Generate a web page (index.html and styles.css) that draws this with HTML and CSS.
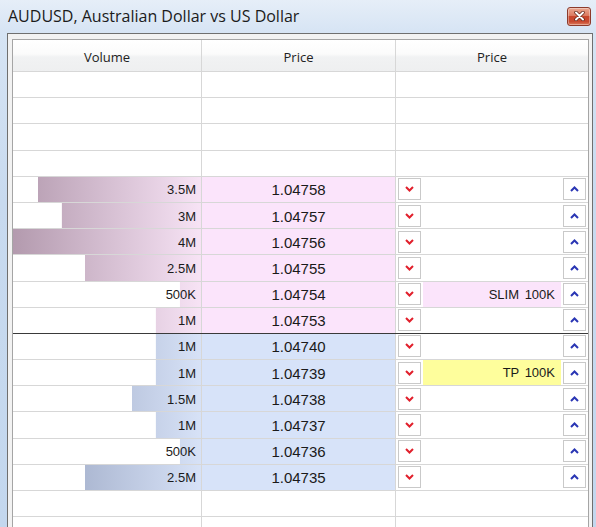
FILE: index.html
```html
<!DOCTYPE html>
<html>
<head>
<meta charset="utf-8">
<link rel="stylesheet" href="styles.css">
</head>
<body>
<div class="window">
  <div class="titlebar">
    <span class="title">AUDUSD, Australian Dollar vs US Dollar</span>
    <div class="close">
      <svg width="11" height="10" viewBox="0 0 11 10"><path d="M2 1.5 L9 8.5 M9 1.5 L2 8.5" stroke="#5a2216" stroke-width="3.4" stroke-linecap="round"/><path d="M2 1.5 L9 8.5 M9 1.5 L2 8.5" stroke="#ffffff" stroke-width="2" stroke-linecap="round"/></svg>
    </div>
  </div>
  <div class="frame">
    <div class="grid">
      <div class="row head"><div class="cell">Volume</div><div class="cell">Price</div><div class="cell">Price</div></div>

      <div class="row"><div class="cell"></div><div class="cell"></div><div class="cell"></div></div>
      <div class="row"><div class="cell"></div><div class="cell"></div><div class="cell"></div></div>
      <div class="row"><div class="cell"></div><div class="cell"></div><div class="cell"></div></div>
      <div class="row"><div class="cell"></div><div class="cell"></div><div class="cell"></div></div>

      <div class="row"><div class="cell vol ask" style="--w:86.7%">3.5M</div><div class="cell price ask">1.04758</div><div class="cell act"><span class="btn dn"><svg width="9" height="6" viewBox="0 0 9 6"><polyline points="1,1 4.5,4.5 8,1" fill="none" stroke="#e1202c" stroke-width="2"/></svg></span><span class="lbl"></span><span class="btn up"><svg width="9" height="6" viewBox="0 0 9 6"><polyline points="1,5 4.5,1.5 8,5" fill="none" stroke="#2a36b4" stroke-width="2"/></svg></span></div></div>
      <div class="row"><div class="cell vol ask" style="--w:74%">3M</div><div class="cell price ask">1.04757</div><div class="cell act"><span class="btn dn"><svg width="9" height="6" viewBox="0 0 9 6"><polyline points="1,1 4.5,4.5 8,1" fill="none" stroke="#e1202c" stroke-width="2"/></svg></span><span class="lbl"></span><span class="btn up"><svg width="9" height="6" viewBox="0 0 9 6"><polyline points="1,5 4.5,1.5 8,5" fill="none" stroke="#2a36b4" stroke-width="2"/></svg></span></div></div>
      <div class="row"><div class="cell vol ask" style="--w:100%">4M</div><div class="cell price ask">1.04756</div><div class="cell act"><span class="btn dn"><svg width="9" height="6" viewBox="0 0 9 6"><polyline points="1,1 4.5,4.5 8,1" fill="none" stroke="#e1202c" stroke-width="2"/></svg></span><span class="lbl"></span><span class="btn up"><svg width="9" height="6" viewBox="0 0 9 6"><polyline points="1,5 4.5,1.5 8,5" fill="none" stroke="#2a36b4" stroke-width="2"/></svg></span></div></div>
      <div class="row"><div class="cell vol ask" style="--w:61.5%">2.5M</div><div class="cell price ask">1.04755</div><div class="cell act"><span class="btn dn"><svg width="9" height="6" viewBox="0 0 9 6"><polyline points="1,1 4.5,4.5 8,1" fill="none" stroke="#e1202c" stroke-width="2"/></svg></span><span class="lbl"></span><span class="btn up"><svg width="9" height="6" viewBox="0 0 9 6"><polyline points="1,5 4.5,1.5 8,5" fill="none" stroke="#2a36b4" stroke-width="2"/></svg></span></div></div>
      <div class="row"><div class="cell vol ask" style="--w:11.2%">500K</div><div class="cell price ask">1.04754</div><div class="cell act"><span class="btn dn"><svg width="9" height="6" viewBox="0 0 9 6"><polyline points="1,1 4.5,4.5 8,1" fill="none" stroke="#e1202c" stroke-width="2"/></svg></span><span class="lbl slim">SLIM 100K</span><span class="btn up"><svg width="9" height="6" viewBox="0 0 9 6"><polyline points="1,5 4.5,1.5 8,5" fill="none" stroke="#2a36b4" stroke-width="2"/></svg></span></div></div>
      <div class="row split"><div class="cell vol ask" style="--w:24%">1M</div><div class="cell price ask">1.04753</div><div class="cell act"><span class="btn dn"><svg width="9" height="6" viewBox="0 0 9 6"><polyline points="1,1 4.5,4.5 8,1" fill="none" stroke="#e1202c" stroke-width="2"/></svg></span><span class="lbl"></span><span class="btn up"><svg width="9" height="6" viewBox="0 0 9 6"><polyline points="1,5 4.5,1.5 8,5" fill="none" stroke="#2a36b4" stroke-width="2"/></svg></span></div></div>

      <div class="row"><div class="cell vol bid" style="--w:24%">1M</div><div class="cell price bid">1.04740</div><div class="cell act"><span class="btn dn"><svg width="9" height="6" viewBox="0 0 9 6"><polyline points="1,1 4.5,4.5 8,1" fill="none" stroke="#e1202c" stroke-width="2"/></svg></span><span class="lbl"></span><span class="btn up"><svg width="9" height="6" viewBox="0 0 9 6"><polyline points="1,5 4.5,1.5 8,5" fill="none" stroke="#2a36b4" stroke-width="2"/></svg></span></div></div>
      <div class="row"><div class="cell vol bid" style="--w:24%">1M</div><div class="cell price bid">1.04739</div><div class="cell act"><span class="btn dn"><svg width="9" height="6" viewBox="0 0 9 6"><polyline points="1,1 4.5,4.5 8,1" fill="none" stroke="#e1202c" stroke-width="2"/></svg></span><span class="lbl tp">TP 100K</span><span class="btn up"><svg width="9" height="6" viewBox="0 0 9 6"><polyline points="1,5 4.5,1.5 8,5" fill="none" stroke="#2a36b4" stroke-width="2"/></svg></span></div></div>
      <div class="row"><div class="cell vol bid" style="--w:36.7%">1.5M</div><div class="cell price bid">1.04738</div><div class="cell act"><span class="btn dn"><svg width="9" height="6" viewBox="0 0 9 6"><polyline points="1,1 4.5,4.5 8,1" fill="none" stroke="#e1202c" stroke-width="2"/></svg></span><span class="lbl"></span><span class="btn up"><svg width="9" height="6" viewBox="0 0 9 6"><polyline points="1,5 4.5,1.5 8,5" fill="none" stroke="#2a36b4" stroke-width="2"/></svg></span></div></div>
      <div class="row"><div class="cell vol bid" style="--w:24%">1M</div><div class="cell price bid">1.04737</div><div class="cell act"><span class="btn dn"><svg width="9" height="6" viewBox="0 0 9 6"><polyline points="1,1 4.5,4.5 8,1" fill="none" stroke="#e1202c" stroke-width="2"/></svg></span><span class="lbl"></span><span class="btn up"><svg width="9" height="6" viewBox="0 0 9 6"><polyline points="1,5 4.5,1.5 8,5" fill="none" stroke="#2a36b4" stroke-width="2"/></svg></span></div></div>
      <div class="row"><div class="cell vol bid" style="--w:11.2%">500K</div><div class="cell price bid">1.04736</div><div class="cell act"><span class="btn dn"><svg width="9" height="6" viewBox="0 0 9 6"><polyline points="1,1 4.5,4.5 8,1" fill="none" stroke="#e1202c" stroke-width="2"/></svg></span><span class="lbl"></span><span class="btn up"><svg width="9" height="6" viewBox="0 0 9 6"><polyline points="1,5 4.5,1.5 8,5" fill="none" stroke="#2a36b4" stroke-width="2"/></svg></span></div></div>
      <div class="row"><div class="cell vol bid" style="--w:61.5%">2.5M</div><div class="cell price bid">1.04735</div><div class="cell act"><span class="btn dn"><svg width="9" height="6" viewBox="0 0 9 6"><polyline points="1,1 4.5,4.5 8,1" fill="none" stroke="#e1202c" stroke-width="2"/></svg></span><span class="lbl"></span><span class="btn up"><svg width="9" height="6" viewBox="0 0 9 6"><polyline points="1,5 4.5,1.5 8,5" fill="none" stroke="#2a36b4" stroke-width="2"/></svg></span></div></div>

      <div class="row"><div class="cell"></div><div class="cell"></div><div class="cell"></div></div>
      <div class="row"><div class="cell"></div><div class="cell"></div><div class="cell"></div></div>
    </div>
  </div>
</div>
</body>
</html>
```

FILE: styles.css
```css
* { box-sizing: border-box; }
html, body { margin: 0; padding: 0; }
body {
  width: 596px;
  height: 527px;
  overflow: hidden;
  background: #c9dbf0;
  font-family: "Liberation Sans", Arial, sans-serif;
  color: #1a1a1a;
}
.window {
  width: 596px;
  height: 527px;
  overflow: hidden;
  display: flex;
  flex-direction: column;
  background: linear-gradient(to bottom, #e6eef8 0, #d6e4f4 33px, #c8daef 200px, #c3d7ee 100%);
}
.titlebar {
  height: 33px;
  flex: none;
  display: flex;
  align-items: center;
  padding: 0 5px 0 8px;
}
.title {
  flex: 1;
  font-family: "Open Sans", sans-serif;
  font-size: 16px;
  color: #1b1b1b;
  margin-top: -1px;
}
.close {
  width: 24px;
  height: 19px;
  margin-top: -1px;
  border: 1px solid #8c3b2c;
  border-radius: 3px;
  background: linear-gradient(to bottom, #eaa891 0, #dc7a60 45%, #c8462b 50%, #c84a30 80%, #dd7d5d 100%);
  display: flex;
  align-items: center;
  justify-content: center;
  box-shadow: inset 0 0 0 1px rgba(255,255,255,0.35);
}
.frame {
  flex: 1;
  min-height: 0;
  margin: 0 3px 0 7px;
  border: 1px solid #6f6f6f;
  border-bottom: none;
  padding: 5px 3px 0 4px;
  background: #f2f2f2;
}
.grid {
  height: 100%;
  border: 1px solid #a5a5a5;
  border-bottom: none;
  background: #ffffff;
  overflow: hidden;
}
.row {
  display: grid;
  grid-template-columns: 189px 194px 192px;
  height: 26.19px;
  border-bottom: 1px solid #d7d7d7;
}
.row.split { border-bottom-color: #3a3a3a; }
.cell {
  border-right: 1px solid #d7d7d7;
  display: flex;
  align-items: center;
  font-size: 13px;
  padding-top: 1px;
}
.cell:last-child { border-right: none; }
.head {
  height: 32px;
  background: linear-gradient(to bottom, #ffffff 0, #fbfbfb 45%, #f1f2f3 55%, #eeeff0 100%);
}
.head .cell {
  justify-content: center;
  font-family: "Open Sans", sans-serif;
  font-size: 13px;
  color: #222;
  padding-top: 3px;
}
.vol {
  justify-content: flex-end;
  padding-right: 5px;
  --w: 0%;
}
.vol.ask {
  background:
    linear-gradient(#ffffff, #ffffff) left top / calc(100% - var(--w)) 100% no-repeat,
    linear-gradient(to right, #b39aae 0, #f7e3f5 100%);
}
.vol.bid {
  background:
    linear-gradient(#ffffff, #ffffff) left top / calc(100% - var(--w)) 100% no-repeat,
    linear-gradient(to right, #939fbc 0, #d7e2f7 100%);
}
.price {
  justify-content: center;
  font-size: 15px;
}
.price.ask { background: #fbe4fb; }
.price.bid { background: #d7e3f9; }
.act {
  padding: 0 2px;
}
.btn {
  flex: none;
  width: 23px;
  height: 22px;
  border: 1px solid #c9c9c9;
  background: #ffffff;
  display: flex;
  align-items: center;
  justify-content: center;
}
.lbl {
  flex: 1;
  align-self: stretch;
  margin: 0 2px;
  display: flex;
  align-items: center;
  justify-content: flex-end;
  padding-right: 6px;
  font-size: 13px;
  word-spacing: 2px;
}
.lbl.slim { background: #fbe4fb; }
.lbl.tp { background: #fefe9c; }
```
